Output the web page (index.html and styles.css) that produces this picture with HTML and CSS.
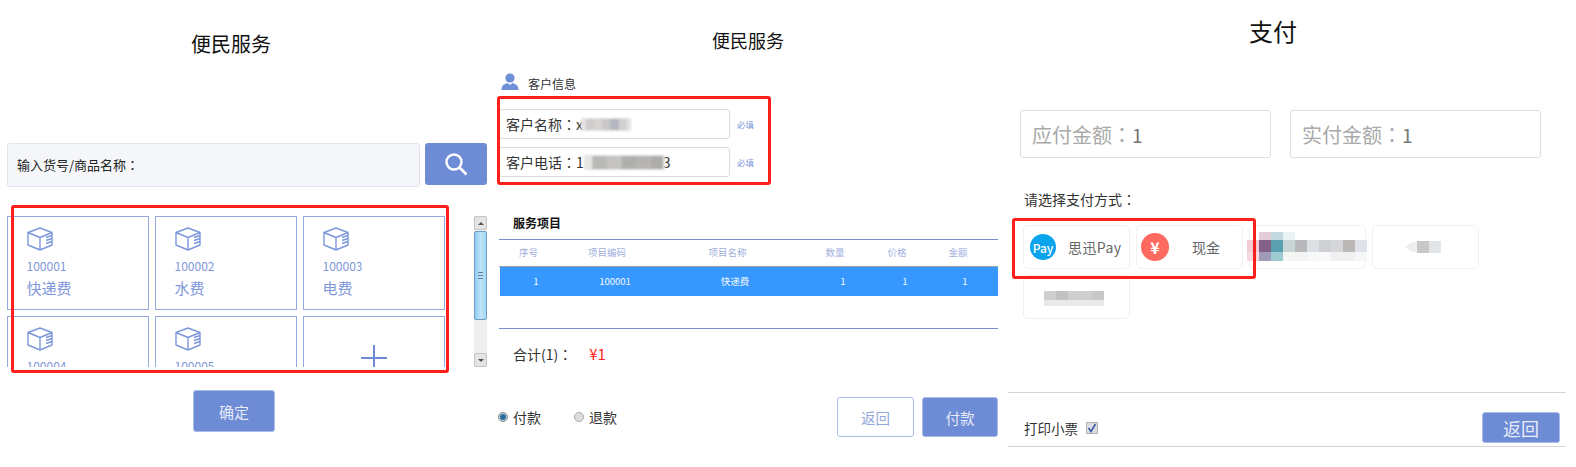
FILE: index.html
```html
<!DOCTYPE html>
<html lang="zh">
<head>
<meta charset="utf-8">
<title>便民服务</title>
<link rel="stylesheet" href="styles.css">
</head>
<body>
<svg class="defs" width="0" height="0">
  <symbol id="box" viewBox="0 0 26 24">
    <path d="M13 1 L25 5.5 V18 L13 23 L1 18 V5.5 Z M1 5.5 L13 10.5 L25 5.5 M13 10.5 V23 M19 10.5 L25 8.5 M19 13.5 L25 11.5 M19 16.5 L25 14.5" fill="none" stroke="currentColor" stroke-width="1.4" stroke-linejoin="round"/>
  </symbol>
</svg>
<main class="page">
  <section class="panel panel-a">
    <h1 class="title-a">便民服务</h1>
    <div class="search">
      <div class="search-box">输入货号/商品名称<span class="colon">：</span></div>
      <button class="search-btn" type="button">
        <svg width="24" height="24" viewBox="0 0 24 24"><circle cx="10" cy="10" r="7.5" fill="none" stroke="#fff" stroke-width="2.4"/><path d="M15.5 15.5 L22.5 22.5" stroke="#fff" stroke-width="2.6" fill="none"/></svg>
      </button>
    </div>
    <div class="list-wrap">
      <div class="list">
        <div class="card"><svg class="box-icon"><use href="#box"/></svg><div class="card-id">100001</div><div class="card-name">快递费</div></div>
        <div class="card"><svg class="box-icon"><use href="#box"/></svg><div class="card-id">100002</div><div class="card-name">水费</div></div>
        <div class="card"><svg class="box-icon"><use href="#box"/></svg><div class="card-id">100003</div><div class="card-name">电费</div></div>
        <div class="card"><svg class="box-icon"><use href="#box"/></svg><div class="card-id">100004</div><div class="card-name">燃气费</div></div>
        <div class="card"><svg class="box-icon"><use href="#box"/></svg><div class="card-id">100005</div><div class="card-name">话费</div></div>
        <div class="card card-add"><svg width="28" height="28" viewBox="0 0 28 28"><path d="M14 1 V27 M1 14 H27" stroke="currentColor" stroke-width="2" fill="none"/></svg></div>
      </div>
      <div class="scrollbar">
        <div class="sb-btn"><span class="arrow-up"></span></div>
        <div class="sb-thumb"><span class="grip"></span></div>
        <div class="sb-track"></div>
        <div class="sb-btn"><span class="arrow-down"></span></div>
      </div>
    </div>
    <div class="confirm-row"><button class="btn btn-confirm" type="button">确定</button></div>
  </section>

  <section class="panel panel-b">
    <h1 class="title-b">便民服务</h1>
    <div class="cust-head">
      <svg width="18" height="17" viewBox="0 0 18 17"><circle cx="9" cy="5" r="4.6" fill="#6f8fd8"/><path d="M0.5 17 C0.5 12.5 3 11 6.5 10 L9 12 L11.5 10 C15 11 17.5 12.5 17.5 17 Z" fill="#6f8fd8"/></svg>
      <span class="cust-label">客户信息</span>
    </div>
    <div class="field-row field-first">
      <div class="field">客户名称<span class="colon">：</span>x<svg class="blur blur-a" width="50" height="13" viewBox="0 0 50 13"><rect width="50" height="13" fill="#e4e2e2"/><rect x="5" y="1" width="8" height="11" fill="#cfcccc"/><rect x="13" y="1" width="8" height="11" fill="#d6d3d3"/><rect x="21" y="1" width="8" height="11" fill="#c8c6c6"/><rect x="29" y="1" width="9" height="11" fill="#b4b6c0"/><rect x="38" y="1" width="8" height="11" fill="#d2d1d2"/></svg></div>
      <span class="req">必填</span>
    </div>
    <div class="field-row">
      <div class="field">客户电话<span class="colon">：</span>1<svg class="blur blur-b" width="81" height="15" viewBox="0 0 78 15" preserveAspectRatio="none"><rect width="78" height="15" fill="#e6e6e4"/><rect x="8" y="1" width="14" height="13" fill="#b9b8b6"/><rect x="22" y="1" width="14" height="13" fill="#c4c3c1"/><rect x="36" y="1" width="14" height="13" fill="#b0afad"/><rect x="50" y="1" width="14" height="13" fill="#b5b4b2"/><rect x="64" y="1" width="12" height="13" fill="#adacaa"/></svg>3</div>
      <span class="req">必填</span>
    </div>
    <h2 class="svc-title">服务项目</h2>
    <div class="table">
      <div class="t-head">
        <span>序号</span><span>项目编码</span><span>项目名称</span><span>数量</span><span>价格</span><span>金额</span>
      </div>
      <div class="t-row">
        <span>1</span><span>100001</span><span>快递费</span><span>1</span><span>1</span><span>1</span>
      </div>
    </div>
    <div class="total">合计(1)<span class="colon">：</span><span class="total-val">¥1</span></div>
    <div class="action-row">
      <div class="radios">
        <span class="radio radio-on"></span><span class="radio-label">付款</span>
        <span class="radio"></span><span class="radio-label">退款</span>
      </div>
      <div class="actions">
        <button class="btn btn-ghost" type="button">返回</button>
        <button class="btn btn-pay" type="button">付款</button>
      </div>
    </div>
  </section>

  <section class="panel panel-c">
    <h1 class="title-c">支付</h1>
    <div class="amounts">
      <div class="amount">应付金额<span class="colon">：</span><span class="amount-val">1</span></div>
      <div class="amount">实付金额<span class="colon">：</span><span class="amount-val">1</span></div>
    </div>
    <div class="choose">请选择支付方式<span class="colon">：</span></div>
    <div class="options">
      <div class="opt"><span class="dot dot-pay">Pay</span><span class="opt-name name-pay">思迅Pay</span></div>
      <div class="opt"><span class="dot dot-cash">¥</span><span class="opt-name name-cash">现金</span></div>
      <div class="opt opt-wide">
        <svg class="mosaic mosaic-c" width="120" height="32" viewBox="0 0 120 32">
          <rect x="12" y="0" width="12" height="8" fill="#e2cdd9"/><rect x="24" y="0" width="12" height="8" fill="#c1d9df"/><rect x="36" y="0" width="12" height="8" fill="#e9f3f3"/>
          <rect x="0" y="8" width="12" height="12" fill="#f4cbd4"/><rect x="12" y="8" width="12" height="12" fill="#845f87"/><rect x="24" y="8" width="12" height="12" fill="#5aa0b0"/><rect x="36" y="8" width="12" height="12" fill="#c8d4d6"/><rect x="48" y="8" width="12" height="12" fill="#b9b9bb"/><rect x="60" y="8" width="12" height="12" fill="#dcdfe4"/><rect x="72" y="8" width="12" height="12" fill="#cfd0d4"/><rect x="84" y="8" width="12" height="12" fill="#d6d7da"/><rect x="96" y="8" width="12" height="12" fill="#bab8b6"/><rect x="108" y="8" width="12" height="12" fill="#dee1e8"/>
          <rect x="0" y="20" width="12" height="9" fill="#f6d8de"/><rect x="12" y="20" width="12" height="9" fill="#a09cb8"/><rect x="24" y="20" width="12" height="9" fill="#9ecad2"/><rect x="36" y="20" width="12" height="9" fill="#f4f6f4"/><rect x="48" y="20" width="12" height="9" fill="#f3f4f4"/><rect x="60" y="20" width="12" height="9" fill="#f7f8f8"/><rect x="72" y="20" width="12" height="9" fill="#f9f9f9"/><rect x="84" y="20" width="24" height="9" fill="#f0f0f0"/><rect x="108" y="20" width="12" height="9" fill="#f6f7f8"/>
        </svg>
      </div>
      <div class="opt">
        <svg class="mosaic mosaic-d" width="36" height="12" viewBox="0 0 36 12"><path d="M0 6 L7 1 H12 V11 H7 Z" fill="#eeeeee"/><rect x="12" y="0" width="12" height="12" fill="#c8c8c8"/><rect x="24" y="0" width="12" height="12" fill="#e2e5e8"/></svg>
      </div>
      <div class="opt">
        <svg class="mosaic mosaic-e" width="60" height="15" viewBox="0 0 60 15"><rect x="0" y="0" width="12" height="9" fill="#cfcfcf"/><rect x="12" y="0" width="12" height="9" fill="#c2c2c2"/><rect x="24" y="0" width="24" height="9" fill="#cfcfcf"/><rect x="48" y="0" width="12" height="9" fill="#c8c8c8"/><rect x="0" y="9" width="60" height="6" fill="#e9e9e9"/></svg>
      </div>
    </div>
    <div class="footer">
      <span class="print-label">打印小票</span>
      <span class="check"><svg width="10" height="10" viewBox="0 0 10 10"><path d="M1.5 5 L4 8.5 L8.5 1" fill="none" stroke="#3f5fa8" stroke-width="1.6"/></svg></span>
      <button class="btn btn-back" type="button">返回</button>
    </div>
  </section>

  <div class="mark mark-a"></div>
  <div class="mark mark-b"></div>
  <div class="mark mark-c"></div>
</main>
</body>
</html>
```
FILE: styles.css
```css
* { box-sizing: border-box; }
html, body { margin: 0; padding: 0; background: #fff; }
body { font-family: "Noto Sans CJK SC", "Liberation Sans", sans-serif; color: #333; text-spacing-trim: space-all; }
.defs { position: absolute; }
.page { position: relative; display: flex; width: 1576px; height: 467px; overflow: hidden; }
.panel { flex: none; }
h1, h2 { margin: 0; font-weight: 400; color: #111; text-align: center; }
button { font-family: inherit; cursor: pointer; padding: 0; }
.colon { display: inline-block; width: 1em; text-align: center; font-family: "Noto Sans CJK TC", sans-serif; }

.btn { border-radius: 3px; border: 1px solid #a9bce8; background: #6e8cd5; color: #e6ebf8; }

/* panel A */
.panel-a { width: 490px; padding-left: 7px; }
.title-a { width: 448px; margin-top: 30px; font-size: 20px; line-height: 28px; }
.search { display: flex; gap: 5px; width: 480px; margin-top: 85px; align-items: flex-start; }
.search-box { width: 413px; height: 44px; padding-left: 9px; line-height: 42px; font-size: 13px; color: #222; background: #f4f6f9; border: 1px solid #dfe5ee; border-radius: 3px; }
.search-btn { width: 62px; height: 42px; display: flex; align-items: center; justify-content: center; border: 0; border-radius: 3px; background: #6e8cd5; }
.list-wrap { display: flex; justify-content: space-between; width: 480px; height: 151px; margin-top: 29px; }
.list { display: grid; grid-template-columns: repeat(3, 142px); grid-auto-rows: 94px; gap: 6px 6px; width: 438px; height: 151px; overflow: hidden; }
.card { border: 1px solid #94a9de; padding: 10px 0 0 18.5px; color: #7f97da; }
.box-icon { display: block; width: 26px; height: 24px; color: #7d97db; }
.card-id { margin-top: 7px; font-size: 12px; line-height: 16px; }
.card-name { margin-top: 4px; font-size: 15px; line-height: 20px; }
.card-add { display: flex; justify-content: center; padding: 27px 0 0; color: #6e8cd5; }
.scrollbar { display: flex; flex-direction: column; width: 13px; height: 151px; background: #efefef; }
.sb-btn { display: flex; align-items: center; justify-content: center; flex: none; width: 13px; height: 14px; background: #e4e4e4; border: 1px solid #c4c4c4; border-radius: 2px; }
.arrow-up { border: 3px solid transparent; border-top: 0; border-bottom: 3px solid #555; }
.arrow-down { border: 3px solid transparent; border-bottom: 0; border-top: 3px solid #555; }
.sb-thumb { display: flex; align-items: center; justify-content: center; flex: none; height: 89px; margin-top: 1px; background: linear-gradient(90deg, #8fcdf0, #bfe4f8 50%, #a5d8f4); border: 1px solid #6d9cc4; border-radius: 2px; }
.grip { width: 5px; height: 7px; border-top: 1px solid #5d7e98; border-bottom: 1px solid #5d7e98; background: linear-gradient(#5d7e98, #5d7e98) center / 100% 1px no-repeat; }
.sb-track { flex: 1; }
.confirm-row { margin-top: 23px; padding-left: 186px; }
.btn-confirm { width: 82px; height: 42px; font-size: 15px; }

/* panel B */
.panel-b { width: 515px; padding-left: 9px; }
.title-b { width: 498px; margin-top: 27px; font-size: 18px; line-height: 26px; }
.cust-head { display: flex; align-items: center; gap: 9px; height: 18px; margin: 19px 0 0 2px; font-size: 12px; color: #333; }
.cust-label { padding-top: 4px; }
.field-row { display: flex; align-items: center; gap: 7px; margin-top: 8px; }
.field-first { margin-top: 19px; }
.field { display: flex; align-items: center; width: 231px; height: 30px; padding-left: 6px; font-size: 14px; color: #333; border: 1px solid #dcdcdc; border-radius: 3px; }
.blur { display: block; flex: none; filter: blur(1px); }
.blur-a { margin-left: -2px; }
.blur-b { margin: 0 -2px 0 0; }
.req { font-size: 8.5px; line-height: 12px; color: #7f97da; }
.svc-title { margin-top: 37px; padding-left: 14px; font-size: 12px; font-weight: 700; line-height: 18px; text-align: left; color: #111; }
.table { width: 499px; height: 90px; margin-top: 7px; border-top: 1px solid #7b8fc8; border-bottom: 1px solid #7b8fc8; }
.t-head, .t-row { display: grid; text-align: center; font-size: 9.5px; }
.t-head { grid-template-columns: 59px 98px 143px 72px 52px 70px; height: 27px; line-height: 25px; color: #9fb0de; border-bottom: 1px solid #9aa0a8; }
.t-row { grid-template-columns: 60px 98px 142px 74px 50px 70px; height: 29px; line-height: 29px; margin-left: 1px; padding-left: 6px; color: #f2f7ff; background: #3698ff; }
.total { margin-top: 15px; padding-left: 14px; font-size: 14px; line-height: 20px; color: #333; }
.total-val { margin-left: 17px; font-size: 15px; color: #f22; }
.action-row { display: flex; align-items: center; justify-content: space-between; width: 500px; margin: 33px 0 0 -1px; }
.radios { display: flex; align-items: center; font-size: 14px; }
.radio { display: block; flex: none; width: 10px; height: 10px; border-radius: 50%; background: #ddd; border: 1px solid #aaa; }
.radio-on { background: #2d6f9c; box-shadow: inset 0 0 0 1px #cfd8de; border-color: #999; }
.radio-label { margin: 0 33px 0 5px; line-height: 20px; color: #333; }
.actions { display: flex; gap: 8px; }
.actions .btn { height: 40px; font-size: 14.5px; }
.btn-ghost { width: 77px; background: #fff; color: #93a8dc; border-color: #a9bce8; }
.btn-pay { width: 76px; }

/* panel C */
.panel-c { width: 571px; padding-left: 15px; }
.title-c { width: 506px; margin-top: 14px; font-size: 24px; line-height: 34px; }
.amounts { display: flex; gap: 19px; margin-top: 62px; }
.amount { width: 251px; height: 48px; padding-left: 11px; line-height: 48px; font-size: 20px; color: #a9a9a9; border: 1px solid #dedede; border-radius: 3px; }
.amount-val { color: #777; font-size: 19px; }
.choose { margin: 31px 0 0 4px; font-size: 14px; line-height: 20px; color: #333; }
.options { display: flex; flex-wrap: wrap; gap: 6px; width: 470px; margin: 16px 0 0 3px; }
.opt { position: relative; display: flex; align-items: center; width: 107px; height: 44px; border: 1px solid #f1f1f1; border-radius: 5px; }
.opt-wide { width: 117px; }
.dot { flex: none; display: flex; align-items: center; justify-content: center; border-radius: 50%; color: #fff; }
.dot-pay { width: 26px; height: 26px; margin-left: 6px; font-size: 12px; font-weight: 500; background: #09a4ec; }
.dot-cash { width: 28px; height: 28px; margin-left: 4px; font-size: 16px; font-weight: 700; background: #ff6a60; }
.opt-name { font-size: 14px; color: #666; white-space: nowrap; }
.name-pay { margin-left: 12px; letter-spacing: 0.4px; }
.name-cash { margin-left: 23px; }
.mosaic { position: absolute; display: block; }
.mosaic-c { left: -3px; top: 6px; }
.mosaic-d { left: 32px; top: 15px; }
.mosaic-e { left: 20px; top: 15px; }
.footer { display: flex; align-items: center; width: 558px; height: 55px; margin: 73px 0 0 -12px; padding: 19px 6px 3px 16px; border-top: 1px solid #d4d4d4; border-bottom: 1px solid #d4d4d4; }
.print-label { font-size: 13.5px; line-height: 20px; color: #333; }
.check { display: flex; align-items: center; justify-content: center; width: 12px; height: 12px; margin-left: 8px; background: #dcdce2; border: 1px solid #b5b5b5; }
.btn-back { width: 78px; height: 31px; margin-left: auto; font-size: 18px; line-height: 26px; }

/* annotation marks */
.mark { position: absolute; border: 3px solid #ff1f1a; border-radius: 3px; pointer-events: none; }
.mark-a { left: 11px; top: 205px; width: 438px; height: 168px; }
.mark-b { left: 497px; top: 96px; width: 274px; height: 89px; }
.mark-c { left: 1012px; top: 218px; width: 244px; height: 61px; }
```
